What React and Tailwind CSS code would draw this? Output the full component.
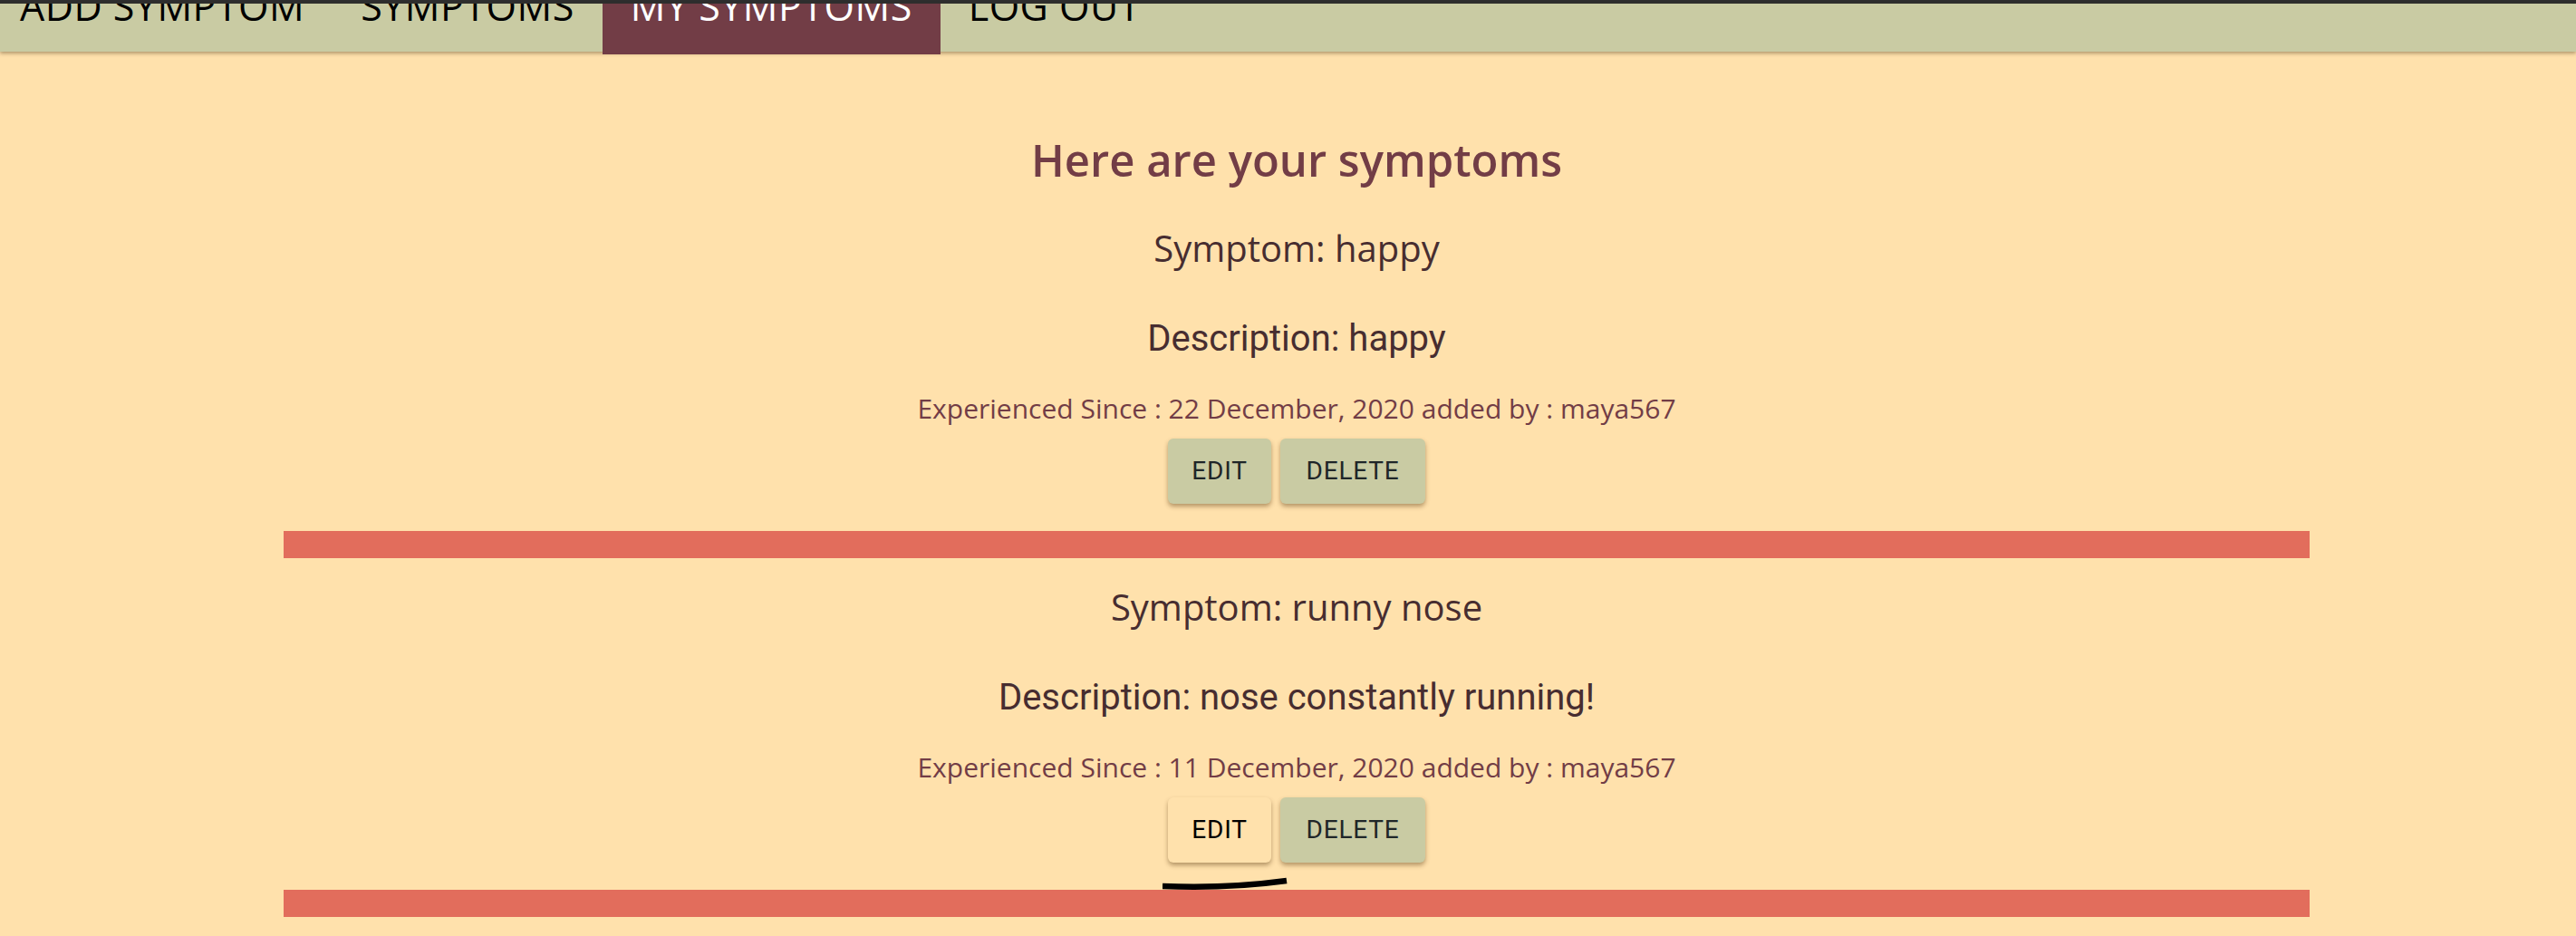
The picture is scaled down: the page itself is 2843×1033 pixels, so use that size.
import React from "react";

const quick = { fontFamily: '"Open Sans", "Noto Sans", sans-serif' };
const roboto = { fontFamily: 'Roboto, "Noto Sans", sans-serif' };

function NavItem({ children, active, first }) {
  return (
    <div
      className={
        "flex h-full items-start " +
        (first ? "pl-[22px] pr-[31px] " : "px-[31px] ") +
        (active ? "bg-[#723d46] text-white h-[56px]" : "text-black")
      }
    >
      <span className="mt-[-21px] block text-[43px] leading-[48px] tracking-[0.5px]" style={quick}>
        {children}
      </span>
    </div>
  );
}

function Card({ symptom, description, date, hovered }) {
  return (
    <div className="flex flex-col items-center">
      <h3 className="text-[40px] leading-[48px] text-[#472d30]" style={quick}>
        Symptom: {symptom}
      </h3>
      <p className="mt-[52px] text-[40px] font-normal leading-[48px] text-[#472d30]" style={roboto}>
        Description: {description}
      </p>
      <p className="mt-[36px] text-[30px] font-medium leading-[34px] text-[#723d46]" style={quick}>
        Experienced Since : {date} added by : maya567
      </p>
      <div className="relative mt-[16px] flex gap-[10px]">
        <button
          className={
            "h-[72px] w-[114px] rounded-[6px] text-[28px] tracking-[0.8px] shadow-[0_3px_5px_rgba(90,60,20,0.45)] " +
            (hovered ? "bg-[#ffe1ac] text-black" : "bg-[#c9cba3] text-[#1f2628]")
          }
          style={roboto}
        >
          EDIT
        </button>
        <button
          className="h-[72px] w-[160px] rounded-[6px] bg-[#c9cba3] text-[28px] tracking-[0.8px] text-[#1f2628] shadow-[0_3px_5px_rgba(90,60,20,0.45)]"
          style={roboto}
        >
          DELETE
        </button>
        {hovered && (
          <svg
            className="absolute left-[-6px] top-[86px]"
            width="145"
            height="20"
            viewBox="0 0 145 20"
          >
            <path d="M0 12 Q70 15 137 6" stroke="#000" strokeWidth="6.5" fill="none" />
          </svg>
        )}
      </div>
      <div className="mt-[30px] h-[30px] w-full bg-[#e26d5c]" />
    </div>
  );
}

export default function App() {
  return (
    <div className="min-h-screen w-full bg-[#ffe1ac]">
      <div className="h-[4px] w-full bg-[#2e2e2e]" />
      <nav className="relative flex h-[53px] items-start overflow-visible bg-[#c9cba3] shadow-[0_2px_4px_rgba(80,60,30,0.45)]">
        <div className="flex h-[53px] items-start overflow-hidden">
          <NavItem first>ADD SYMPTOM</NavItem>
          <NavItem>SYMPTOMS</NavItem>
        </div>
        <div className="flex h-[56px] items-start overflow-hidden">
          <NavItem active>MY SYMPTOMS</NavItem>
        </div>
        <div className="flex h-[53px] items-start overflow-hidden">
          <NavItem>LOG OUT</NavItem>
        </div>
      </nav>
      <main className="ml-[313px] w-[2236px] pt-[89px]">
        <h2 className="text-center text-[49px] font-semibold leading-[60px] text-[#723d46]" style={quick}>
          Here are your symptoms
        </h2>
        <div className="mt-[44px]">
          <Card symptom="happy" description="happy" date="22 December, 2020" />
        </div>
        <div className="mt-[30px]">
          <Card
            symptom="runny nose"
            description="nose constantly running!"
            date="11 December, 2020"
            hovered
          />
        </div>
      </main>
    </div>
  );
}
